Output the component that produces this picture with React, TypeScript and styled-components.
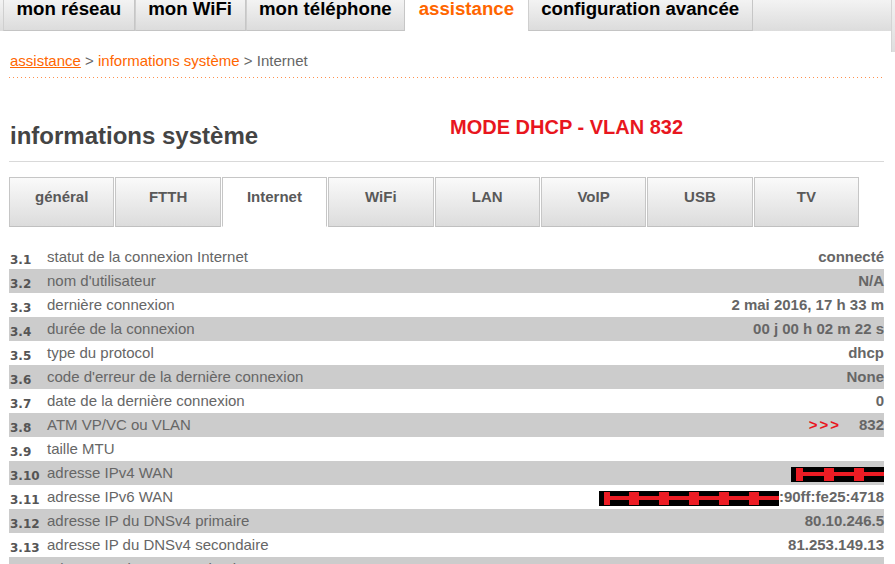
import React from "react";
import styled, { createGlobalStyle } from "styled-components";

const GlobalStyle = createGlobalStyle`
  html, body {
    margin: 0;
    padding: 0;
    background: #fff;
    font-family: "Liberation Sans", Arial, sans-serif;
  }
`;

const Page = styled.div`
  display: flex;
  align-items: flex-start;
  width: 895px;
  overflow: hidden;
`;

const Main = styled.div`
  width: 891px;
  flex: 0 0 891px;
`;

const SideStrip = styled.div`
  flex: 0 0 4px;
  height: 52px;
  box-sizing: border-box;
  border-left: 1px solid #d4d4d4;
  background: linear-gradient(#f2f2f2, #dedede);
`;

const NavBar = styled.nav`
  display: flex;
  height: 31px;
  padding-left: 3px;
  background: linear-gradient(#f3f3f3, #dcdcdc);
`;

const NavTab = styled.a<{ $active?: boolean }>`
  box-sizing: border-box;
  height: 31px;
  padding: 0 12.5px;
  font-size: 18.67px;
  font-weight: bold;
  line-height: 17px;
  white-space: nowrap;
  text-decoration: none;
  color: ${(p) => (p.$active ? "#ff6600" : "#000")};
  background: ${(p) => (p.$active ? "#fff" : "linear-gradient(#f3f3f3, #dcdcdc)")};
  border-left: 1px solid ${(p) => (p.$active ? "transparent" : "#cfcfcf")};
  border-right: 1px solid ${(p) => (p.$active ? "transparent" : "#c6c6c6")};
  border-bottom: 1px solid ${(p) => (p.$active ? "transparent" : "#c4c4c4")};
`;

const Content = styled.div`
  padding: 0 7px 0 9px;
`;

const Breadcrumb = styled.div`
  margin-top: 21px;
  padding-left: 1px;
  font-size: 15px;
  line-height: 18px;
  color: #666;
`;

const Crumb = styled.a<{ $underline?: boolean }>`
  color: #ff6600;
  text-decoration: ${(p) => (p.$underline ? "underline" : "none")};
`;

const DottedRule = styled.div`
  height: 1px;
  margin-top: 7px;
  background: repeating-linear-gradient(
    to right,
    #ff8f4d 0 1px,
    transparent 1px 4px
  );
`;

const TitleRow = styled.div`
  display: grid;
  grid-template-columns: 441px auto;
  margin-top: 38px;
  padding-bottom: 11px;
  border-bottom: 1px solid #d9d9d9;
`;

const Title = styled.h1`
  margin: 6px 0 0 1px;
  font-size: 24px;
  line-height: 28px;
  font-weight: bold;
  color: #444;
`;

const ModeNote = styled.div`
  font-size: 20px;
  line-height: 23px;
  font-weight: bold;
  color: #e8161e;
`;

const SubTabs = styled.div`
  display: grid;
  grid-template-columns: repeat(8, 1fr);
  column-gap: 1px;
  width: 850px;
  margin-top: 15px;
`;

const SubTab = styled.div<{ $active?: boolean }>`
  box-sizing: border-box;
  height: 50px;
  padding-top: 10px;
  text-align: center;
  font-size: 15px;
  line-height: 18px;
  font-weight: bold;
  color: #595959;
  border: 1px solid #c6c6c6;
  border-bottom-color: ${(p) => (p.$active ? "#fff" : "#c0c0c0")};
  background: ${(p) => (p.$active ? "#fff" : "linear-gradient(#fafafa, #dcdcdc)")};
`;

const Rows = styled.div`
  margin-top: 18px;
`;

const Row = styled.div<{ $shaded?: boolean }>`
  display: flex;
  align-items: flex-start;
  height: 24px;
  background: ${(p) => (p.$shaded ? "#cccccc" : "#fff")};
`;

const Num = styled.span`
  flex: 0 0 37px;
  height: 21px;
  padding: 3px 0 0 1px;
  font-family: "DejaVu Sans", Verdana, sans-serif;
  font-size: 12px;
  line-height: 24px;
  font-weight: bold;
  color: #555;
`;

const Label = styled.span`
  font-size: 15px;
  line-height: 24px;
  color: #666;
  white-space: nowrap;
`;

const Value = styled.span`
  display: flex;
  align-items: center;
  height: 24px;
  margin-left: auto;
  font-size: 15px;
  line-height: 24px;
  font-weight: bold;
  color: #666;
  white-space: nowrap;
`;

const Arrows = styled.span`
  margin-right: 18px;
  letter-spacing: 2px;
  color: #e8161e;
`;

const BarSvg = styled.svg`
  display: block;
  margin-top: 2px;
`;

function Redacted({ width, blocks }: { width: number; blocks: [number, number][] }) {
  return (
    <BarSvg width={width} height={15} viewBox={`0 0 ${width} 15`}>
      <rect x={0} y={0} width={width} height={15} fill="#000" />
      <rect x={5} y={5} width={width - 5} height={4} fill="#ec1c24" />
      {blocks.map(([x, w]) => (
        <rect key={x} x={x} y={1} width={w} height={13} fill="#ec1c24" />
      ))}
    </BarSvg>
  );
}

const navItems = [
  "mon réseau",
  "mon WiFi",
  "mon téléphone",
  "assistance",
  "configuration avancée",
];

const subTabs = ["général", "FTTH", "Internet", "WiFi", "LAN", "VoIP", "USB", "TV"];

const rows: { n: string; label: string; value?: React.ReactNode }[] = [
  { n: "3.1", label: "statut de la connexion Internet", value: "connecté" },
  { n: "3.2", label: "nom d'utilisateur", value: "N/A" },
  { n: "3.3", label: "dernière connexion", value: "2 mai 2016, 17 h 33 m" },
  { n: "3.4", label: "durée de la connexion", value: "00 j 00 h 02 m 22 s" },
  { n: "3.5", label: "type du protocol", value: "dhcp" },
  { n: "3.6", label: "code d'erreur de la dernière connexion", value: "None" },
  { n: "3.7", label: "date de la dernière connexion", value: "0" },
  {
    n: "3.8",
    label: "ATM VP/VC ou VLAN",
    value: (
      <>
        <Arrows>&gt;&gt;&gt;</Arrows>832
      </>
    ),
  },
  { n: "3.9", label: "taille MTU" },
  {
    n: "3.10",
    label: "adresse IPv4 WAN",
    value: <Redacted width={93} blocks={[[5, 7], [33, 10], [63, 10]]} />,
  },
  {
    n: "3.11",
    label: "adresse IPv6 WAN",
    value: (
      <>
        <Redacted
          width={180}
          blocks={[[5, 6], [30, 10], [60, 10], [90, 10], [120, 10], [150, 10]]}
        />
        :90ff:fe25:4718
      </>
    ),
  },
  { n: "3.12", label: "adresse IP du DNSv4 primaire", value: "80.10.246.5" },
  { n: "3.13", label: "adresse IP du DNSv4 secondaire", value: "81.253.149.13" },
  { n: "3.14", label: "adresse IP du DNSv6 primaire" },
];

export default function App() {
  return (
    <Page>
      <GlobalStyle />
      <Main>
        <NavBar>
          {navItems.map((item) => (
            <NavTab key={item} $active={item === "assistance"}>
              {item}
            </NavTab>
          ))}
        </NavBar>
        <Content>
          <Breadcrumb>
            <Crumb $underline>assistance</Crumb> &gt; <Crumb>informations système</Crumb> &gt; Internet
          </Breadcrumb>
          <DottedRule />
          <TitleRow>
            <Title>informations système</Title>
            <ModeNote>MODE DHCP - VLAN 832</ModeNote>
          </TitleRow>
          <SubTabs>
            {subTabs.map((t) => (
              <SubTab key={t} $active={t === "Internet"}>
                {t}
              </SubTab>
            ))}
          </SubTabs>
          <Rows>
            {rows.map((r, i) => (
              <Row key={r.n} $shaded={i % 2 === 1}>
                <Num>{r.n}</Num>
                <Label>{r.label}</Label>
                {r.value !== undefined && <Value>{r.value}</Value>}
              </Row>
            ))}
          </Rows>
        </Content>
      </Main>
      <SideStrip />
    </Page>
  );
}
